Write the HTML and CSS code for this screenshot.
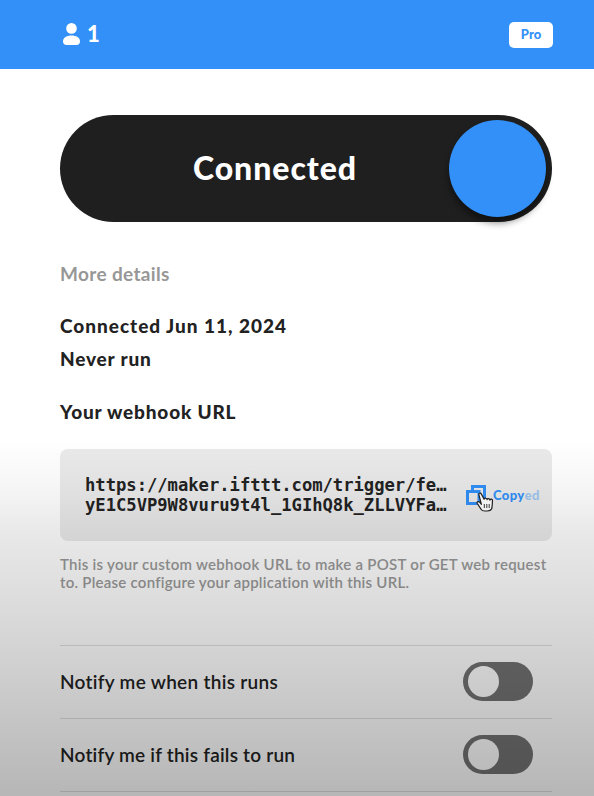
FILE: index.html
```html
<!DOCTYPE html>
<html lang="en">
<head>
<meta charset="utf-8">
<title>Webhook connection</title>
<link rel="stylesheet" href="styles.css">
</head>
<body>
<header class="topbar">
  <div class="users">
    <svg class="user-icon" viewBox="0 0 17 22" width="17" height="22"><ellipse cx="8.5" cy="5.4" rx="5.3" ry="5.4"/><path d="M0 18.2C0 14.5 4 12.4 8.5 12.4S17 14.5 17 18.2C17 20.6 15.8 22 13.5 22H3.5C1.2 22 0 20.6 0 18.2Z"/></svg>
    <span class="count">1</span>
  </div>
  <span class="pro"><span class="pro-text">Pro</span></span>
</header>
<main class="content">
  <div class="connect"><span class="connect-label">Connected</span><span class="knob"></span></div>
  <div class="more"><span>More details</span></div>
  <div class="fact date"><span>Connected Jun 11, 2024</span></div>
  <div class="fact never"><span>Never run</span></div>
  <div class="fact heading"><span>Your webhook URL</span></div>
  <section class="urlbox">
    <div class="url"><div>https://maker.ifttt.com/trigger/fe…</div><div>yE1C5VP9W8vuru9t4l_1GIhQ8k_ZLLVYFa…</div></div>
    <div class="copy">
      <svg class="copy-icon" width="20" height="20" viewBox="0 0 20 20"><path d="M6.5 6V1.5H18.5V14H13.5M1.5 6.5H13V18.5H1.5Z"/></svg>
      <span class="copy-text">Copy</span><span class="copied">ed</span>
      <svg class="cursor" width="18" height="20" viewBox="0 0 18 20"><path d="M5.4 12.3 3.6 10.2C2.3 8.8.4 9.9 1.3 11.5L5 17.2C5.8 18.5 7 19 8.7 19H11.3C14.5 19 16 17 16.1 14.4L16.5 8.7C16.6 7 14.4 6.6 13.9 8.2 13.7 6.3 11.6 6.1 11.1 7.6 10.8 5.9 8.8 5.8 8.1 7.1L5.4 2.1C4.4.3 2.2 1.2 3 3.1Z"/><path class="creases" d="M8.3 12v4M10.8 12v4M13.2 12v4"/></svg>
    </div>
  </section>
  <div class="help"><div class="help-one"><span>This is your custom webhook URL to make a POST or GET web request</span></div><div class="help-two"><span>to. Please configure your application with this URL.</span></div></div>
  <div class="settings">
    <div class="row"><span class="runs">Notify me when this runs</span><span class="switch"></span></div>
    <div class="row second"><span class="fails">Notify me if this fails to run</span><span class="switch"></span></div>
  </div>
</main>
<div class="shade"></div>
</body>
</html>
```
FILE: styles.css
```css
* { box-sizing: border-box; }
body { margin: 0; height: 796px; overflow: hidden; position: relative; background: #fff; color: #222; font-family: Lato, sans-serif; font-weight: 700; font-variant-ligatures: none; white-space: nowrap; }
.topbar { height: 69px; padding: 0 41px 0 63px; display: flex; justify-content: space-between; align-items: center; background: #3290f8; color: #fff; }
.users { display: flex; align-items: center; gap: 7px; }
.user-icon { fill: #fff; margin-top: -2px; }
.count { font-size: 22px; line-height: 26px; font-weight: 900; margin-top: -1px; }
.pro { width: 44px; height: 26px; border-radius: 5px; background: #fff; color: #3290f8; font-size: 13px; line-height: 25px; font-weight: 900; text-align: center; }
.content { padding: 46px 42px 0 60px; }
.connect { height: 107px; width: 492px; border-radius: 54px; background: #1f1f1f; color: #fff; display: flex; align-items: center; justify-content: space-between; padding: 0 6px 0 133px; }
.connect-label { font-size: 32px; font-weight: 900; line-height: 40px; letter-spacing: .95px; margin-top: -2px; }
.knob { width: 97px; height: 97px; border-radius: 50%; background: #3290f8; box-shadow: 0 6px 7px rgba(0,0,0,.45); }
.more { height: 24px; margin-top: 40px; font-size: 19px; line-height: 24px; letter-spacing: .35px; color: #979797; }
.fact { height: 24px; font-size: 19px; line-height: 24px; font-weight: 900; letter-spacing: .82px; }
.date { margin-top: 28px; letter-spacing: .98px; }
.never { margin-top: 9px; }
.heading { margin-top: 29px; }
.urlbox { height: 92px; margin-top: 25px; padding: 0 11px 1px 25px; border-radius: 8px; background: #eaeaea; display: flex; align-items: center; justify-content: space-between; }
.url { font-family: "DejaVu Sans Mono", monospace; font-size: 17.2px; line-height: 20px; font-weight: 700; letter-spacing: -.02px; color: #222; }
.copy { width: 75px; height: 20px; display: flex; align-items: center; position: relative; color: #3290f8; font-size: 13px; line-height: 18px; font-weight: 900; letter-spacing: .4px; }
.copy-icon { flex: none; margin-right: 7px; fill: none; stroke: #3290f8; stroke-width: 3; }
.copied { opacity: .4; }
.cursor { position: absolute; left: 10px; top: 7px; fill: #fff; stroke: #222; stroke-width: 1.2; stroke-linejoin: round; }
.creases { fill: none; stroke-width: .9; }
.help { margin-top: 14px; height: 38px; font-size: 15px; line-height: 18px; color: #999; font-weight: 600; }
.help-one { letter-spacing: .28px; }
.help-two { letter-spacing: .25px; }
.settings { margin-top: 52px; border-top: 1px solid #dfdfdf; }
.row { height: 73px; border-bottom: 1px solid #dfdfdf; display: flex; align-items: center; justify-content: space-between; padding: 0 19px 1px 0; font-size: 19px; line-height: 24px; font-weight: 600; }
.runs { letter-spacing: .3px; }
.fails { letter-spacing: .22px; }
.switch { width: 70px; height: 39px; border-radius: 20px; padding: 4px 5px; background: #727272; }
.switch::before { content: ""; display: block; width: 31px; height: 31px; border-radius: 50%; background: #fff; }
.shade { position: absolute; left: 0; right: 0; top: 440px; bottom: 0; pointer-events: none; background: linear-gradient(rgba(0,0,0,0), rgba(0,0,0,.04) 50px, rgba(0,0,0,.085) 90px, rgba(0,0,0,.12) 140px, rgba(0,0,0,.155) 190px, rgba(0,0,0,.235) 290px, rgba(0,0,0,.285)); }
```
